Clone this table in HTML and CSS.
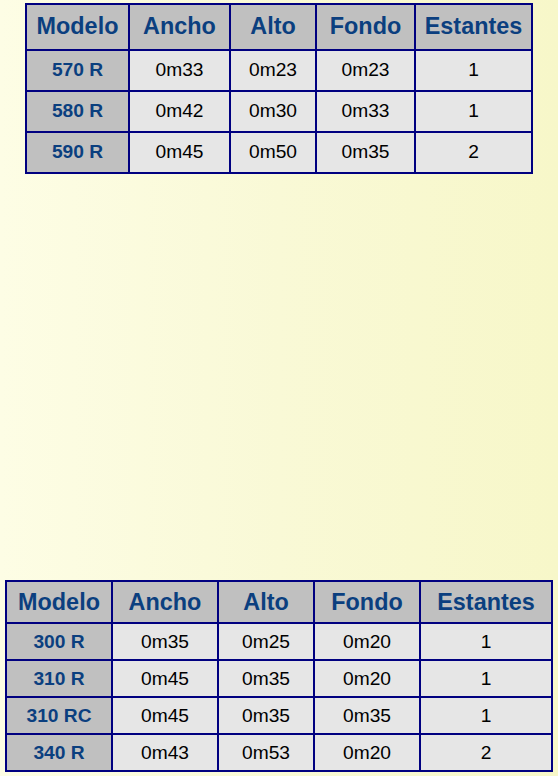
FILE: index.html
```html
<!DOCTYPE html>
<html lang="es">
<head>
<meta charset="utf-8">
<title>Modelos</title>
<link rel="stylesheet" href="styles.css">
</head>
<body>
<table class="spec spec-a">
  <colgroup>
    <col class="a1"><col class="a2"><col class="a3"><col class="a4"><col class="a5">
  </colgroup>
  <tr><th>Modelo</th><th>Ancho</th><th>Alto</th><th>Fondo</th><th>Estantes</th></tr>
  <tr><td class="model">570 R</td><td>0m33</td><td>0m23</td><td>0m23</td><td>1</td></tr>
  <tr><td class="model">580 R</td><td>0m42</td><td>0m30</td><td>0m33</td><td>1</td></tr>
  <tr><td class="model">590 R</td><td>0m45</td><td>0m50</td><td>0m35</td><td>2</td></tr>
</table>

<table class="spec spec-b">
  <colgroup>
    <col class="b1"><col class="b2"><col class="b3"><col class="b4"><col class="b5">
  </colgroup>
  <tr><th>Modelo</th><th>Ancho</th><th>Alto</th><th>Fondo</th><th>Estantes</th></tr>
  <tr><td class="model">300 R</td><td>0m35</td><td>0m25</td><td>0m20</td><td>1</td></tr>
  <tr><td class="model">310 R</td><td>0m45</td><td>0m35</td><td>0m20</td><td>1</td></tr>
  <tr><td class="model">310 RC</td><td>0m45</td><td>0m35</td><td>0m35</td><td>1</td></tr>
  <tr><td class="model">340 R</td><td>0m43</td><td>0m53</td><td>0m20</td><td>2</td></tr>
</table>
</body>
</html>
```
FILE: styles.css
```css
html, body {
  margin: 0;
  padding: 0;
}
body {
  min-height: 776px;
  background: linear-gradient(to right, #fdfde5 0%, #f9f9d6 50%, #f7f7c9 100%);
  font-family: "Liberation Sans", Arial, sans-serif;
  padding-top: 3px;
  box-sizing: border-box;
}
.spec {
  border-collapse: collapse;
  table-layout: fixed;
  margin: 0 auto;
  border: 2px solid #000080;
}
.spec th, .spec td {
  border: 2px solid #000080;
  text-align: center;
  padding: 0;
}
.spec th {
  background: #c0c0c0;
  color: #0b3f7f;
  font-size: 23.4px;
  font-weight: bold;
  line-height: 28px;
}
.spec td {
  background: #e6e6e6;
  color: #000;
  font-size: 19.2px;
  line-height: 23px;
}
.spec td.model {
  background: #c0c0c0;
  color: #0b3f7f;
  font-weight: bold;
}
.spec-a {
  width: 506px;
}
.spec-a th { padding: 7px 0 9px; }
.spec-a td { padding: 7px 0 9px; }
.a1 { width: 103px; }
.a2 { width: 101px; }
.a3 { width: 86px; }
.a4 { width: 99px; }
.a5 { width: 117px; }

.spec-b {
  width: 546px;
  margin-top: 406px;
}
.spec-b th { padding: 6px 0; }
.spec-b td { padding: 6px 0; }
.b1 { width: 106px; }
.b2 { width: 106px; }
.b3 { width: 96px; }
.b4 { width: 106px; }
.b5 { width: 132px; }
```
